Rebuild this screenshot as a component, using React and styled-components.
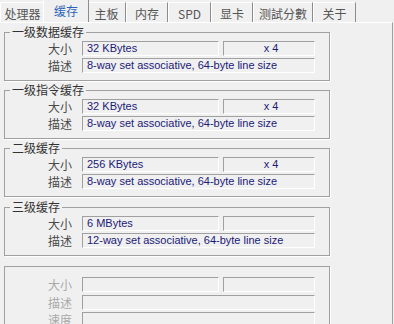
import React from 'react'
import styled, {createGlobalStyle} from 'styled-components'

const Global = createGlobalStyle`
  html, body {
    margin: 0;
    padding: 0;
    background: #f0f0f0;
  }
  body {
    width: 394px;
    height: 324px;
    overflow: hidden;
    font-family: "Noto Sans CJK SC", "Liberation Sans", sans-serif;
  }
`

const Window = styled.div`
  width: 394px;
  height: 324px;
  background: #f0f0f0;
  overflow: hidden;
`

const TabBar = styled.div`
  display: flex;
  align-items: flex-end;
  height: 22px;
  position: relative;
  z-index: 1;
`

const Tab = styled.div`
  box-sizing: border-box;
  height: ${p => p.$active ? 23 : 20}px;
  width: ${p => p.$w}px;
  margin: ${p => p.$active ? '0 -2px' : '0'};
  display: flex;
  align-items: center;
  justify-content: center;
  padding-top: 1px;
  padding-bottom: ${p => p.$active ? 2 : 0}px;
  font-size: 12px;
  color: ${p => p.$active ? '#2a63b8' : '#555'};
  background: #f0f0f0;
  border-top: 1px solid #fff;
  border-left: 1px solid #fff;
  border-right: 1px solid #8c8c8c;
  z-index: ${p => p.$active ? 2 : 0};
  white-space: nowrap;
`

const Panel = styled.div`
  box-sizing: border-box;
  width: 393px;
  height: 302px;
  border-top: 1px solid #fff;
  border-right: 1px solid #a0a0a0;
  padding: 2px 0 0 4px;
`

const Group = styled.fieldset`
  box-sizing: border-box;
  width: 325px;
  margin: 0 0 ${p => p.$gap ?? 2}px 0;
  padding: 0 14px 7px 0;
  border: 1px solid #a0a0a0;
  box-shadow: 1px 1px 0 #fff;
`

const Title = styled.legend`
  margin-left: 5px;
  padding: 0 ${p => p.children ? 2 : 0}px;
  height: 14px;
  line-height: 14px;
  font-size: 12px;
  color: #333;
`

const Row = styled.div`
  display: flex;
  align-items: center;
  height: 15px;
  margin-top: ${p => p.$top ?? 2}px;
`

const Label = styled.div`
  width: 67px;
  margin-right: 10px;
  text-align: right;
  font-size: 12px;
  line-height: 15px;
  color: ${p => p.$off ? '#aaa' : '#4a4a4a'};
`

const Field = styled.div`
  box-sizing: border-box;
  width: ${p => p.$w}px;
  height: 15px;
  margin-right: ${p => p.$gap || 0}px;
  padding-left: 4px;
  border-top: 1px solid #a0a0a0;
  border-left: 1px solid #a0a0a0;
  border-right: 1px solid #fff;
  border-bottom: 1px solid #fff;
  font-family: "Liberation Sans", sans-serif;
  font-size: 11px;
  line-height: 13px;
  color: #1a1a78;
  text-align: ${p => p.$center ? 'center' : 'left'};
  white-space: nowrap;
  overflow: hidden;
`

const tabs = [
  ['处理器', 45], ['缓存', 46], ['主板', 39], ['内存', 42],
  ['SPD', 43], ['显卡', 42], ['测試分數', 60], ['关于', 43],
]

const caches = [
  {title: '一级数据缓存', size: '32 KBytes', ways: 'x 4', desc: '8-way set associative, 64-byte line size', gap: 2},
  {title: '一级指令缓存', size: '32 KBytes', ways: 'x 4', desc: '8-way set associative, 64-byte line size', gap: 2},
  {title: '二级缓存', size: '256 KBytes', ways: 'x 4', desc: '8-way set associative, 64-byte line size', gap: 3},
  {title: '三级缓存', size: '6 MBytes', ways: '', desc: '12-way set associative, 64-byte line size', gap: 3},
]

function CacheGroup({c}){
  return (
    <Group $gap={c.gap}>
      <Title>{c.title}</Title>
      <Row>
        <Label>大小</Label>
        <Field $w={137} $gap={4}>{c.size}</Field>
        <Field $w={92} $center>{c.ways}</Field>
      </Row>
      <Row>
        <Label>描述</Label>
        <Field $w={233}>{c.desc}</Field>
      </Row>
    </Group>
  )
}

export default function App(){
  return (
    <Window>
      <Global/>
      <TabBar>
        {tabs.map(([name, w], i) => (
          <Tab key={name} $w={w} $active={i === 1}>{name}</Tab>
        ))}
      </TabBar>
      <Panel>
        {caches.map(c => <CacheGroup key={c.title} c={c}/>)}
        <Group>
          <Title/>
          <Row $top={4}>
            <Label $off>大小</Label>
            <Field $w={137} $gap={4}/>
            <Field $w={92}/>
          </Row>
          <Row $top={3}>
            <Label $off>描述</Label>
            <Field $w={233}/>
          </Row>
          <Row $top={2}>
            <Label $off>速度</Label>
            <Field $w={233}/>
          </Row>
        </Group>
      </Panel>
    </Window>
  )
}
